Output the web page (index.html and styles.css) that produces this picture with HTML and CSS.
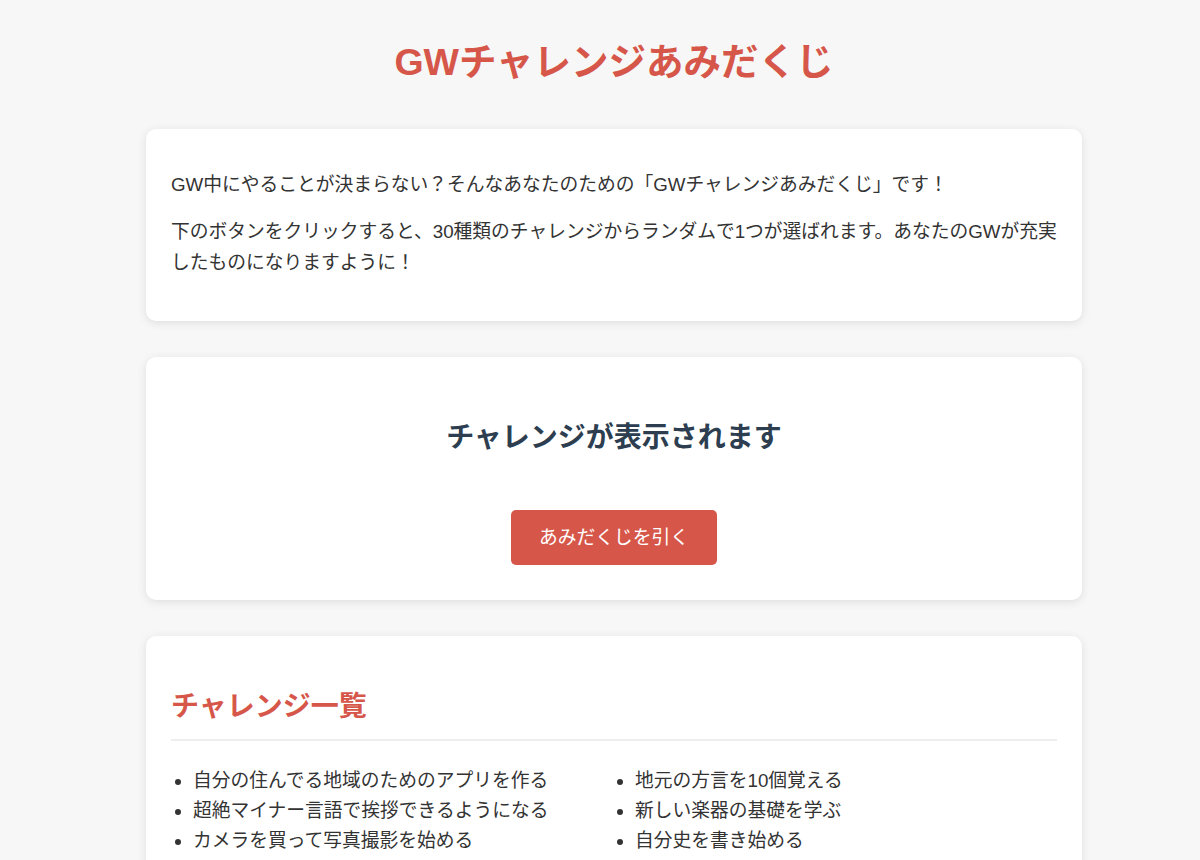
FILE: index.html
```html
<!DOCTYPE html>
<html lang="ja">
<head>
<meta charset="utf-8">
<title>GWチャレンジあみだくじ</title>
<link rel="stylesheet" href="styles.css">
</head>
<body>
<div class="container">
  <h1 class="title">GWチャレンジあみだくじ</h1>

  <section class="card intro">
    <p>GW中にやることが決まらない？そんなあなたのための「GWチャレンジあみだくじ」です！</p>
    <p>下のボタンをクリックすると、30種類のチャレンジからランダムで1つが選ばれます。あなたのGWが充実したものになりますように！</p>
  </section>

  <section class="card draw">
    <h2 class="result">チャレンジが表示されます</h2>
    <button class="draw-btn" type="button">あみだくじを引く</button>
  </section>

  <section class="card list-card">
    <h2 class="list-title">チャレンジ一覧</h2>
    <ul class="challenge-list">
      <li>自分の住んでる地域のためのアプリを作る</li>
      <li>地元の方言を10個覚える</li>
      <li>超絶マイナー言語で挨拶できるようになる</li>
      <li>新しい楽器の基礎を学ぶ</li>
      <li>カメラを買って写真撮影を始める</li>
      <li>自分史を書き始める</li>
      <li>近所の知らない道を散歩する</li>
      <li>一日デジタルデトックスをする</li>
      <li>新しいレシピに挑戦する</li>
      <li>本を3冊読む</li>
    </ul>
  </section>
</div>
</body>
</html>
```

FILE: styles.css
```css
* {
  box-sizing: border-box;
}

body {
  margin: 0;
  padding: 40px 0 40px 28px;
  background: #f7f7f7;
  color: #333;
  font-family: "Liberation Sans", "Noto Sans CJK JP", sans-serif;
  font-size: 18.75px;
  line-height: 1.65;
}

.container {
  max-width: 936px;
  margin: 0 auto;
}

.title {
  margin: 0 0 44px;
  text-align: center;
  color: #d6574a;
  font-size: 37.5px;
  font-weight: 700;
  line-height: 45px;
}

.card {
  background: #fff;
  border-radius: 10px;
  box-shadow: 0 2px 10px rgba(0, 0, 0, 0.1);
  padding: 25px;
  margin-bottom: 36px;
}

.intro {
  padding-bottom: 26px;
}

.intro p {
  margin: 16px 0;
}

.draw {
  padding: 36px 25px 35px;
  text-align: center;
}

.result {
  margin: 28px 0 55px;
  color: #2c3e50;
  font-size: 28px;
  font-weight: 700;
  line-height: 34px;
}

.draw-btn {
  display: inline-block;
  background: #d6574a;
  color: #fff;
  border: none;
  border-radius: 5px;
  padding: 13px 28px;
  font-family: inherit;
  font-size: 18.75px;
  line-height: 29px;
  cursor: pointer;
}

.list-title {
  margin: 29px 0 0;
  padding-bottom: 15px;
  border-bottom: 2px solid #eee;
  color: #d6574a;
  font-size: 28px;
  font-weight: 700;
  line-height: 34px;
}

.challenge-list {
  display: grid;
  grid-template-columns: 1fr 1fr;
  column-gap: 20px;
  margin: 25px 0 0;
  padding-left: 22px;
  line-height: 30px;
}
```
